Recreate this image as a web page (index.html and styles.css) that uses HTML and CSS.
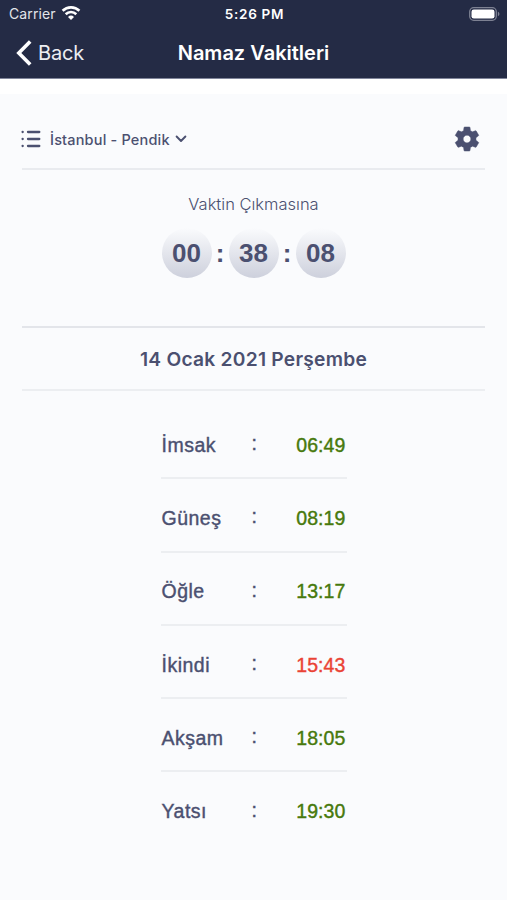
FILE: index.html
```html
<!doctype html>
<html lang="tr">

<head>
  <meta charset="utf-8">
  <title>Namaz Vakitleri</title>
  <meta name="viewport" content="width=device-width, initial-scale=1">
  <link rel="stylesheet" href="styles.css">
</head>

<body>
  <header>
    <div class="status-bar">
      <div class="carrier">
        <span>Carrier</span>
        <svg width="20" height="14" viewBox="0 0 20 14" fill="none" stroke="#fff" stroke-width="2.6">
          <path d="M1.6 4.8a12 12 0 0 1 16.800 0" />
          <path d="M4.700 8.200a7.600 7.600 0 0 1 10.600 0" />
          <path d="M10 14l-3-3.100a4.300 4.300 0 0 1 6 0z" fill="#fff" stroke="none" />
        </svg>
      </div>
      <span class="clock">5:26 PM</span>
      <svg class="battery" width="31" height="14" viewBox="0 0 31 14">
        <rect x=".7" y=".7" width="26.6" height="12.6" rx="4" fill="none" stroke="#7d8192" stroke-width="1.3" />
        <rect x="2.5" y="2.4" width="23" height="9.2" rx="2.3" fill="#fff" />
        <path d="M28.9 4.8c2 .7 2 3.7 0 4.4z" fill="#7d8192" />
      </svg>
    </div>
    <nav>
      <a class="back">
        <svg width="16" height="26" viewBox="0 0 16 26" fill="none" stroke="#fff" stroke-width="3.6">
          <path d="M14.2 1.4L2.8 13l11.4 11.6" />
        </svg>
        <span>Back</span>
      </a>
      <h1>Namaz Vakitleri</h1>
    </nav>
  </header>

  <main>
    <div class="location">
      <svg class="list-icon" width="20" height="18" viewBox="0 0 20 18" stroke="#4b5070" stroke-width="2.3" stroke-linecap="round">
        <path d="M7 2h11.3M7 9h11.3M7 16h11.3" />
        <path d="M1.6 2h.1M1.6 9h.1M1.6 16h.1" />
      </svg>
      <span class="city">İstanbul - Pendik</span>
      <svg width="12" height="8" viewBox="0 0 12 8" fill="none" stroke="#4b5070" stroke-width="1.9" stroke-linecap="round" stroke-linejoin="round">
        <path d="M1.6 1.5L6 6l4.4-4.5" />
      </svg>
      <svg class="settings" width="30" height="30" viewBox="0 0 24 24" fill="#4b5070">
        <path d="M19.14 12.94c.04-.3.06-.61.06-.94 0-.32-.02-.64-.07-.94l2.03-1.58c.18-.14.23-.41.12-.61l-1.92-3.32c-.12-.22-.37-.29-.59-.22l-2.39.96c-.5-.38-1.03-.7-1.62-.94l-.36-2.54c-.04-.24-.24-.41-.48-.41h-3.84c-.24 0-.43.17-.47.41l-.36 2.54c-.59.24-1.13.57-1.62.94l-2.39-.96c-.22-.08-.47 0-.59.22L2.74 8.87c-.12.21-.08.47.12.61l2.03 1.58c-.05.3-.09.63-.09.94s.02.64.07.94l-2.03 1.58c-.18.14-.23.41-.12.61l1.92 3.32c.12.22.37.29.59.22l2.39-.96c.5.38 1.03.7 1.62.94l.36 2.54c.05.24.24.41.48.41h3.84c.24 0 .44-.17.47-.41l.36-2.54c.59-.24 1.13-.56 1.62-.94l2.39.96c.22.08.47 0 .59-.22l1.92-3.32c.12-.22.07-.47-.12-.61l-2.01-1.58zM12 15.1c-1.7 0-3.1-1.4-3.1-3.1s1.4-3.1 3.1-3.1 3.1 1.4 3.1 3.1-1.4 3.1-3.1 3.1z" stroke="#4b5070" stroke-width=".4" />
      </svg>
    </div>

    <section class="countdown">
      <p>Vaktin Çıkmasına</p>
      <div class="timer">
        <span class="unit">00</span>
        <span class="sep">:</span>
        <span class="unit">38</span>
        <span class="sep">:</span>
        <span class="unit">08</span>
      </div>
    </section>

    <h2>14 Ocak 2021 Perşembe</h2>

    <ul class="times">
      <li><span class="name">İmsak</span><span class="colon">:</span><span class="time">06:49</span></li>
      <li><span class="name">Güneş</span><span class="colon">:</span><span class="time">08:19</span></li>
      <li><span class="name">Öğle</span><span class="colon">:</span><span class="time">13:17</span></li>
      <li><span class="name">İkindi</span><span class="colon">:</span><span class="time current">15:43</span></li>
      <li><span class="name">Akşam</span><span class="colon">:</span><span class="time">18:05</span></li>
      <li><span class="name">Yatsı</span><span class="colon">:</span><span class="time">19:30</span></li>
    </ul>
  </main>
</body>
</html>
```

FILE: styles.css
```css
* {
  box-sizing: border-box;
}
body {
  margin: 0;
  height: 900px;
  overflow: hidden;
  background-color: #fafbfd;
  color: #4b5070;
  font-family: Inter, sans-serif;
}
header {
  height: 79px;
  background-color: #242b45;
  border-bottom: 1px solid #80859a;
  color: white;
}
.status-bar, nav {
  display: grid;
  grid-template-columns: 1fr auto 1fr;
  align-items: center;
}
.status-bar {
  height: 27px;
  padding: 0 7px 0 9px;
}
.carrier {
  display: flex;
  align-items: center;
  gap: 5px;
  font-size: 14px;
  letter-spacing: 0.1px;
  color: #e3e5ea;
}
.carrier svg {
  margin-top: -2px;
}
.clock {
  font-size: 13.5px;
  font-weight: 600;
  letter-spacing: 0.7px;
}
.battery {
  justify-self: end;
}
nav {
  height: 51px;
  padding: 0 16px;
}
.back {
  display: flex;
  align-items: center;
  gap: 6px;
  font-size: 20px;
  letter-spacing: -0.2px;
  color: #eceef2;
}
h1 {
  margin: 0;
  font-size: 20px;
  font-weight: 600;
}

main {
  padding: 0 22px;
  border-top: 15px solid white;
}
.location {
  display: flex;
  align-items: center;
  height: 76px;
  padding-top: 16px;
  border-bottom: 2px solid #e9ebef;
}
.city {
  margin: 0 5px 0 9px;
  font-size: 14.5px;
  font-weight: 500;
  letter-spacing: 0.18px;
}
.list-icon {
  margin-left: -1px;
}
.settings {
  margin-left: auto;
  margin-right: 3px;
}

.countdown {
  height: 158px;
  padding-top: 24px;
  border-bottom: 2px solid #e3e5ea;
  text-align: center;
}
.countdown p {
  margin: 0;
  font-size: 16.5px;
  line-height: 20px;
  font-weight: 300;
}
.timer {
  display: flex;
  justify-content: center;
  align-items: center;
  margin-top: 14px;
  font: bold 26px/50px "Liberation Sans", sans-serif;
}
.unit {
  width: 50px;
  height: 50px;
  border-radius: 50%;
  background: linear-gradient(#fafbfd, #cdd0dc);
}
.sep {
  width: 17px;
}

h2 {
  margin: 0;
  height: 63px;
  border-bottom: 2px solid #eceef1;
  font-size: 19.2px;
  line-height: 63px;
  font-weight: 600;
  letter-spacing: 0.25px;
  text-align: center;
}

.times {
  width: 186px;
  margin: 15px auto 0;
  padding: 0;
  list-style: none;
  font: 19.5px "Liberation Sans", sans-serif;
  /* between regular and bold */
  -webkit-text-stroke: 0.4px;
}
.times li {
  display: grid;
  grid-template-columns: 84px 1fr auto;
  align-items: center;
  height: 73.3px;
  padding: 7px 1px 0;
  border-bottom: 2px solid #eceef1;
}
.times li:last-child {
  border-color: transparent;
}
.name {
  letter-spacing: 0.5px;
}
.colon {
  padding-left: 6px;
  margin-top: -3px;
}
.time {
  color: #47790c;
  letter-spacing: 0.1px;
}
.time.current {
  color: #ea4335;
}
```
